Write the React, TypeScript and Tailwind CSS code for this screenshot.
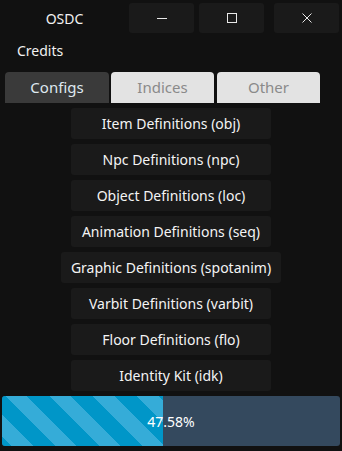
import React from "react";

const items = [
  "Item Definitions (obj)",
  "Npc Definitions (npc)",
  "Object Definitions (loc)",
  "Animation Definitions (seq)",
  "Graphic Definitions (spotanim)",
  "Varbit Definitions (varbit)",
  "Floor Definitions (flo)",
  "Identity Kit (idk)",
];

export default function App() {
  const pct = 47.58;
  return (
    <div
      className="w-[342px] h-[451px] bg-[#111111] flex flex-col overflow-hidden text-white"
      style={{ fontFamily: '"Noto Sans", "Open Sans", sans-serif' }}
    >
      <div className="flex items-start pt-[3px] h-[36px]">
        <div className="w-[129px] h-[30px] flex items-center justify-center text-[14px] text-[#f2f2f2]">OSDC</div>
        <button className="w-[65px] h-[30px] rounded-[3px] bg-[#1a1a1a] flex items-center justify-center">
          <svg width="12" height="12" viewBox="0 0 12 12">
            <line x1="1" y1="6.5" x2="11" y2="6.5" stroke="#e8e8e8" strokeWidth="1" />
          </svg>
        </button>
        <button className="ml-[5px] w-[65px] h-[30px] rounded-[3px] bg-[#1a1a1a] flex items-center justify-center">
          <svg width="12" height="12" viewBox="0 0 12 12">
            <rect x="1.5" y="1.5" width="9" height="9" fill="none" stroke="#e8e8e8" strokeWidth="1" />
          </svg>
        </button>
        <button className="ml-[10px] w-[65px] h-[30px] rounded-[3px] bg-[#1a1a1a] flex items-center justify-center">
          <svg width="12" height="12" viewBox="0 0 12 12">
            <path d="M1.5 1.5 L10.5 10.5 M10.5 1.5 L1.5 10.5" stroke="#e8e8e8" strokeWidth="1" />
          </svg>
        </button>
      </div>
      <div className="pl-[17px] h-[36px] pt-[4px] text-[14px] text-[#f2f2f2]">Credits</div>
      <div className="flex pl-[5px] h-[31px]">
        <div className="w-[104px] h-[31px] rounded-t-[4px] bg-[#3a3a3a] flex items-center justify-center text-[15px] text-[#dfe8f0]">Configs</div>
        <div className="ml-[2px] w-[103px] h-[31px] rounded-t-[4px] bg-[#e3e3e3] flex items-center justify-center text-[15px] text-[#8a8a8a]">Indices</div>
        <div className="ml-[3px] w-[103px] h-[31px] rounded-t-[4px] bg-[#e3e3e3] flex items-center justify-center text-[15px] text-[#8a8a8a]">Other</div>
      </div>
      <div className="flex flex-col items-center gap-[5px] pt-[5px]">
        {items.map((t) => (
          <button
            key={t}
            className="min-w-[200px] h-[31px] px-[10px] rounded-[3px] bg-[#1a1a1a] flex items-center justify-center text-[14px] text-[#f4f4f4] whitespace-nowrap"
          >
            {t}
          </button>
        ))}
      </div>
      <div className="mx-[2px] mt-[5px] h-[50px] rounded-[3px] bg-[#34495e] relative overflow-hidden flex">
        <div
          className="h-full bg-[repeating-linear-gradient(45deg,#0096c8_0px,#0096c8_6.7px,#35acd8_6.7px,#35acd8_22px,#0096c8_22px,#0096c8_31px)]"
          style={{ width: `${pct}%` }}
        />
        <div className="absolute inset-0 flex items-center justify-center text-[14px] text-white">{pct}%</div>
      </div>
    </div>
  );
}
